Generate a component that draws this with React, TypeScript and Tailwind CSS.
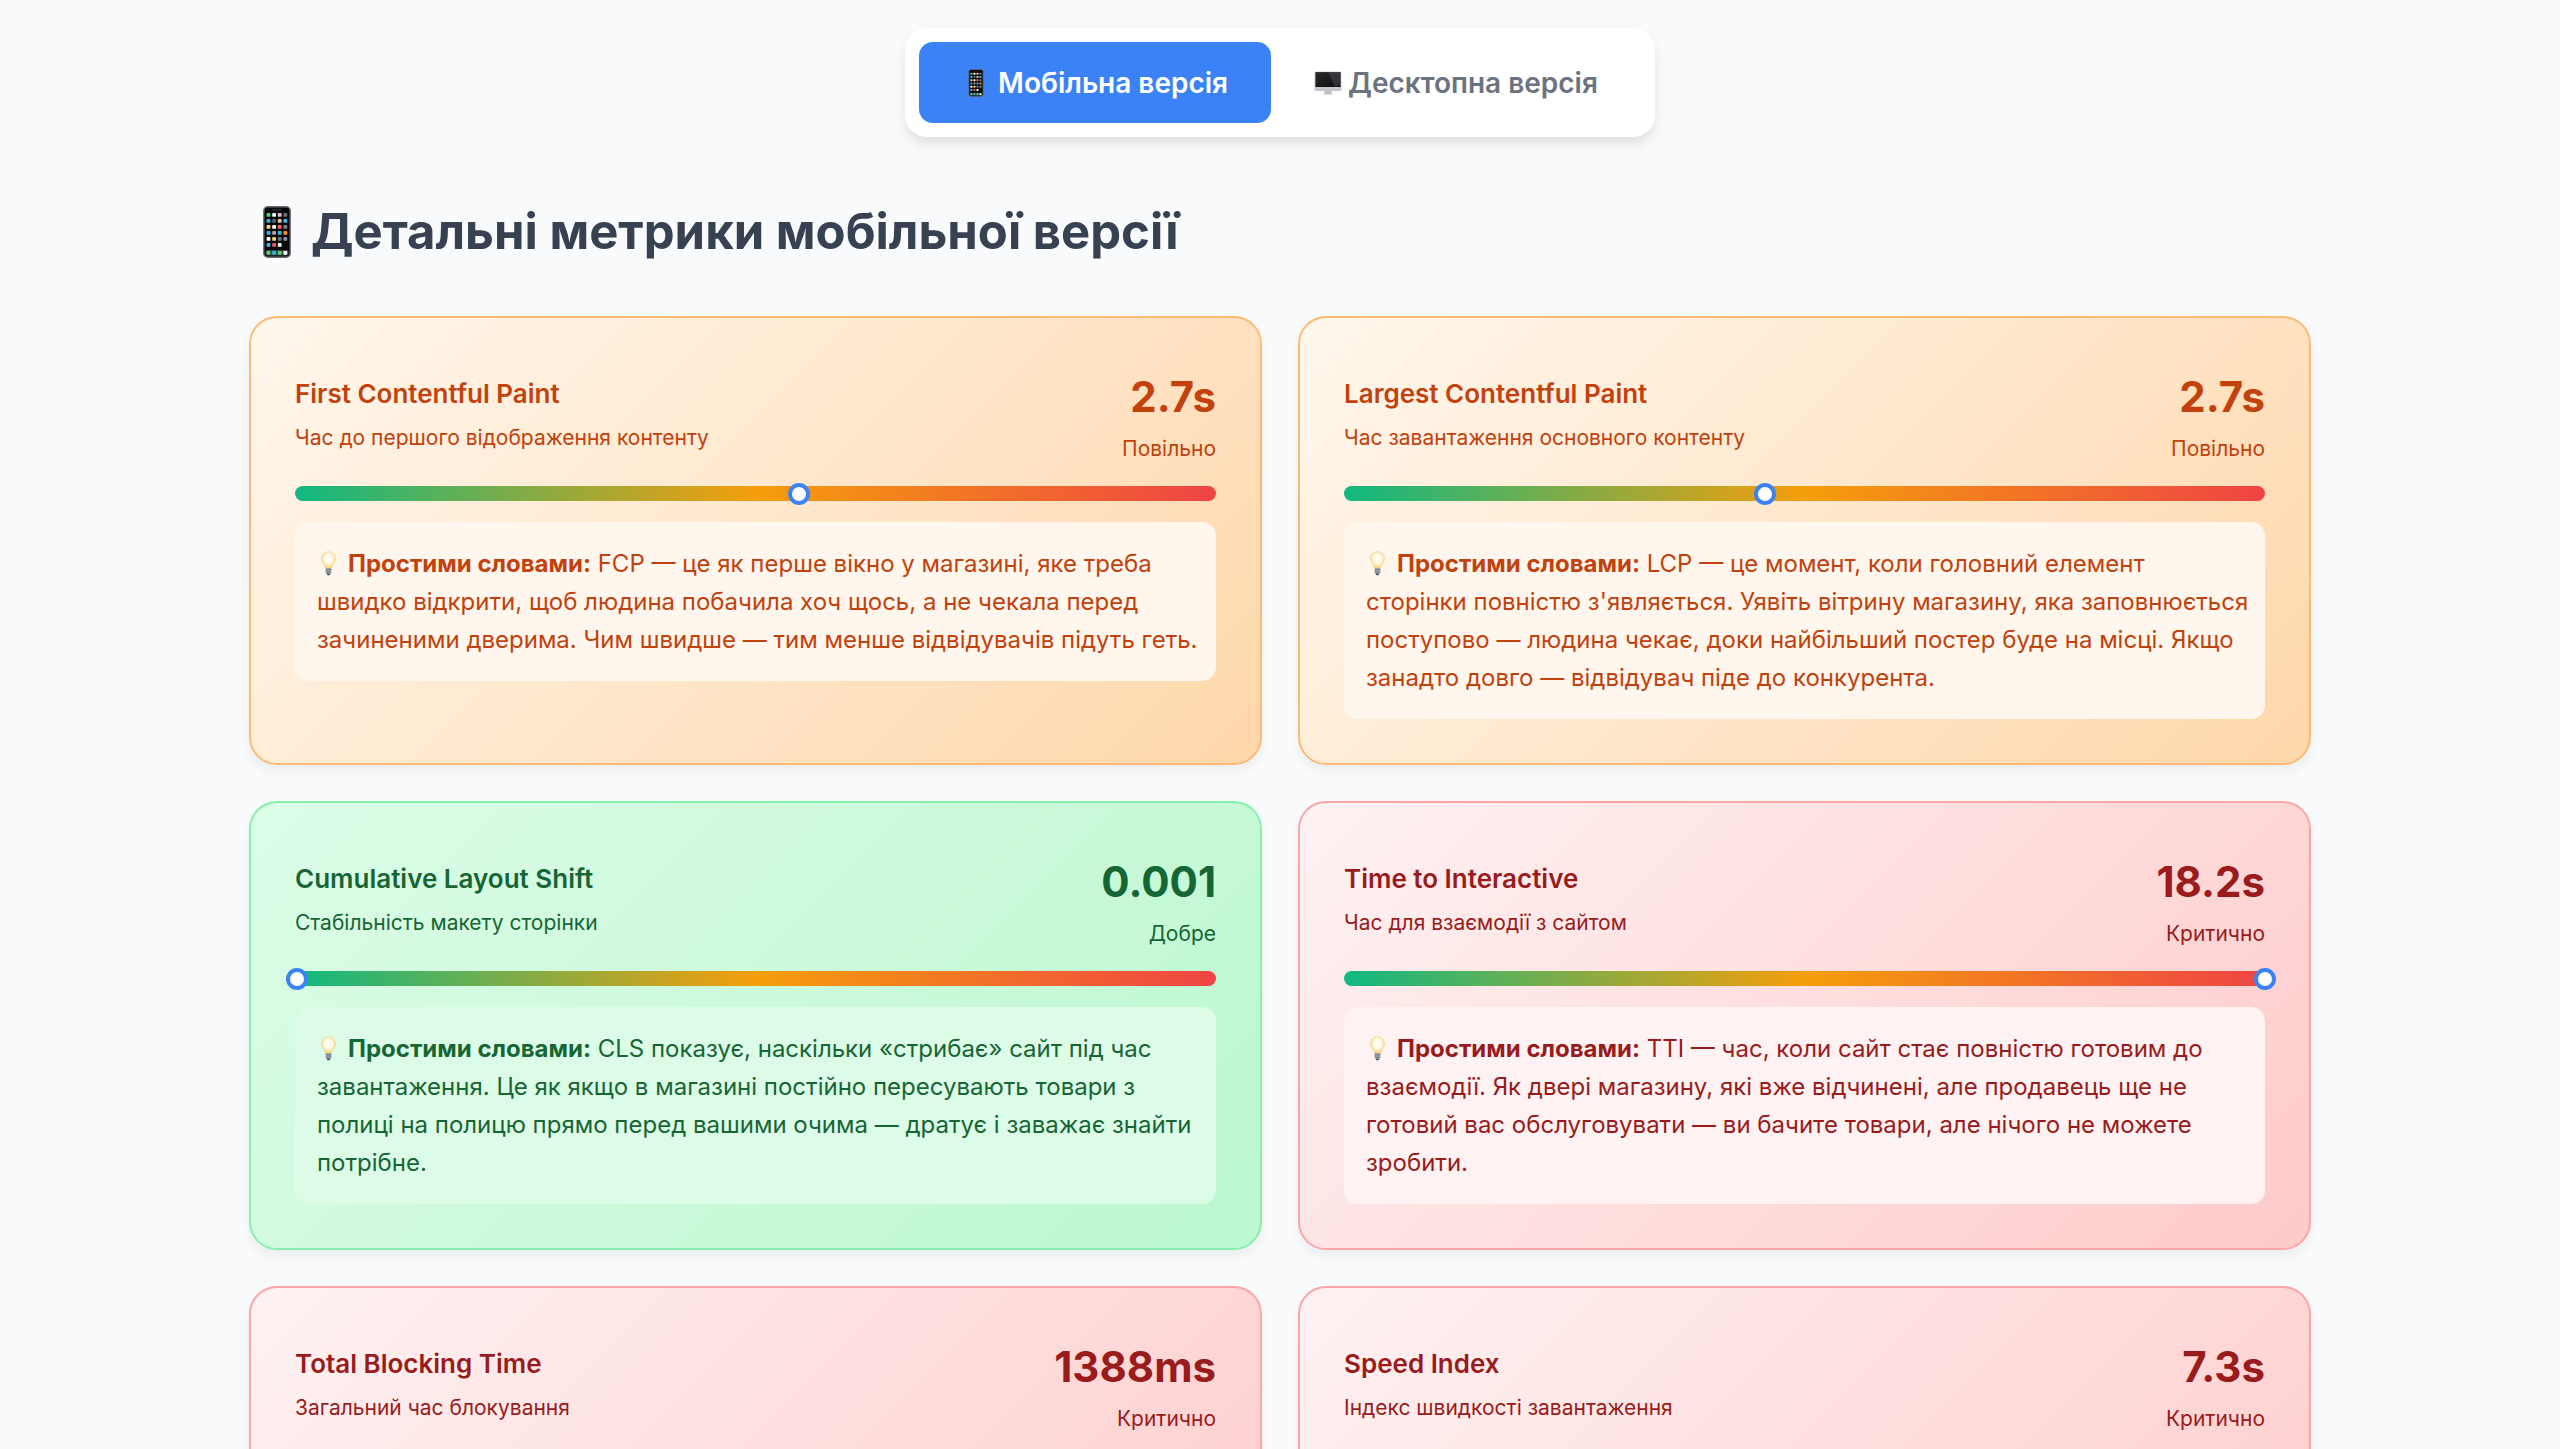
import { useState } from "react";

function PhoneIcon({ className }: { className: string }) {
  const colors = ["#4cd964", "#f4f4f5", "#e3c3cb", "#6f7078", "#35b8f1", "#5b6470", "#f2c0b0", "#38bdf8", "#f8d568", "#ffffff", "#ff6b5e", "#7b8088", "#2dbdf5", "#c99a9a", "#32b4ea", "#ff9500", "#ffffff", "#f8d568", "#64748b", "#8b8f96", "#35b8f1", "#ff5a4f", "#ffffff"];
  return (
    <svg viewBox="0 0 28 52" className={className} aria-hidden="true">
      <rect x="0.8" y="0.8" width="26.4" height="50.4" rx="4" fill="#08090b" stroke="#6b6d70" strokeWidth="1.4" />
      <rect x="9" y="2.8" width="10" height="1.6" rx="0.8" fill="#25262a" />
      {colors.map((c, i) => (
        <rect key={i} x={3.6 + (i % 4) * 5.6} y={7 + Math.floor(i / 4) * 6} width="3.8" height="3.8" rx="0.9" fill={c} />
      ))}
      <rect x="2.6" y="44" width="22.8" height="5.4" rx="1.6" fill="#3f4347" />
      {["#4cd964", "#35b8f1", "#4cd964", "#ffffff"].map((c, i) => (
        <rect key={i} x={3.6 + i * 5.6} y="44.9" width="3.8" height="3.8" rx="0.9" fill={c} />
      ))}
    </svg>
  );
}

function DesktopIcon({ className }: { className: string }) {
  return (
    <svg viewBox="0 0 30 26" className={className} aria-hidden="true">
      <defs>
        <linearGradient id="screen" x1="0" y1="0" x2="1" y2="1">
          <stop offset="0" stopColor="#2b2b2d" />
          <stop offset="1" stopColor="#0c0c0d" />
        </linearGradient>
        <linearGradient id="chin" x1="0" y1="0" x2="0" y2="1">
          <stop offset="0" stopColor="#dcdde0" />
          <stop offset="1" stopColor="#c3c5ca" />
        </linearGradient>
      </defs>
      <path d="M11.5 21h7l.6 4H10.9z" fill="#b9bbc0" />
      <rect x="10" y="24.4" width="10" height="1.4" rx=".7" fill="#d6d8dc" />
      <rect x="0.5" y="0.5" width="29" height="21" rx="1.4" fill="url(#chin)" />
      <rect x="1.5" y="1.3" width="27" height="16" fill="url(#screen)" />
      <path d="M15 1.3h13.5v14l-6 2z" fill="#55575b" opacity=".45" />
    </svg>
  );
}

function BulbIcon({ className }: { className: string }) {
  return (
    <svg viewBox="0 0 16 26" className={className} aria-hidden="true">
      <defs>
        <radialGradient id="glass" cx=".5" cy=".42" r=".58">
          <stop offset="0" stopColor="#ffffff" />
          <stop offset=".55" stopColor="#fff6dc" />
          <stop offset="1" stopColor="#f5d070" />
        </radialGradient>
      </defs>
      <path d="M8 .5C3.8.5.6 3.7.6 7.8c0 3.7 2.6 5.4 3.5 8.2.3.9.6 2 1.6 2h4.600c1 0 1.300-1.100 1.600-2 .9-2.800 3.500-4.500 3.500-8.200C15.4 3.700 12.200.5 8 .5z" fill="url(#glass)" stroke="#f3d488" strokeWidth=".8" />
      <path d="M5 17.800h6v4.700L9.600 25H6.400L5 22.500z" fill="#a3a8ae" />
      <path d="M5 19.300h6M5 21h6M5.200 22.700h5.600" stroke="#6b7280" strokeWidth=".7" />
      <path d="M6.200 24h3.600l-.8 1.500H7z" fill="#3f4650" />
    </svg>
  );
}

const tones = {
  slow: {
    card: "from-[#fff7ed] to-[#fed7aa] border-[#fdba74] text-[#c2410c]",
    note: "bg-[#fff7ed]",
  },
  good: {
    card: "from-[#dcfce7] to-[#bbf7d0] border-[#86efac] text-[#166534]",
    note: "bg-[#dcfce7]",
  },
  critical: {
    card: "from-[#fef2f2] to-[#fecaca] border-[#fca5a5] text-[#991b1b]",
    note: "bg-[#fef2f2]",
  },
};

type Metric = {
  name: string;
  about: string;
  value: string;
  status: string;
  tone: keyof typeof tones;
  position: number;
  note?: string;
};

const metrics: Metric[] = [
  {
    name: "First Contentful Paint",
    about: "Час до першого відображення контенту",
    value: "2.7s",
    status: "Повільно",
    tone: "slow",
    position: 54.7,
    note: "FCP — це як перше вікно у магазині, яке треба швидко відкрити, щоб людина побачила хоч щось, а не чекала перед зачиненими дверима. Чим швидше — тим менше відвідувачів підуть геть.",
  },
  {
    name: "Largest Contentful Paint",
    about: "Час завантаження основного контенту",
    value: "2.7s",
    status: "Повільно",
    tone: "slow",
    position: 45.7,
    note: "LCP — це момент, коли головний елемент сторінки повністю з'являється. Уявіть вітрину магазину, яка заповнюється поступово — людина чекає, доки найбільший постер буде на місці. Якщо занадто довго — відвідувач піде до конкурента.",
  },
  {
    name: "Cumulative Layout Shift",
    about: "Стабільність макету сторінки",
    value: "0.001",
    status: "Добре",
    tone: "good",
    position: 0.2,
    note: "CLS показує, наскільки «стрибає» сайт під час завантаження. Це як якщо в магазині постійно пересувають товари з полиці на полицю прямо перед вашими очима — дратує і заважає знайти потрібне.",
  },
  {
    name: "Time to Interactive",
    about: "Час для взаємодії з сайтом",
    value: "18.2s",
    status: "Критично",
    tone: "critical",
    position: 100,
    note: "TTI — час, коли сайт стає повністю готовим до взаємодії. Як двері магазину, які вже відчинені, але продавець ще не готовий вас обслуговувати — ви бачите товари, але нічого не можете зробити.",
  },
  {
    name: "Total Blocking Time",
    about: "Загальний час блокування",
    value: "1388ms",
    status: "Критично",
    tone: "critical",
    position: 100,
  },
  {
    name: "Speed Index",
    about: "Індекс швидкості завантаження",
    value: "7.3s",
    status: "Критично",
    tone: "critical",
    position: 100,
  },
];

function MetricCard({ metric }: { metric: Metric }) {
  const tone = tones[metric.tone];
  return (
    <article className={`min-h-[449px] rounded-[28px] border-2 bg-linear-135 p-11 shadow-[0_7px_11px_rgba(0,0,0,0.05)] ${tone.card}`}>
      <header className="mb-5 flex items-center justify-between">
        <div className="pb-0.5">
          <h3 className="mb-1.5 text-[26px] leading-[43px] font-semibold">{metric.name}</h3>
          <p className="text-[21px] leading-[34px]">{metric.about}</p>
        </div>
        <div className="text-right">
          <div className="text-[42px] leading-[70px] font-bold">{metric.value}</div>
          <div className="text-[21px] leading-[34px]">{metric.status}</div>
        </div>
      </header>
      <div className="relative mb-[21px] h-[15px] rounded-full bg-[linear-gradient(90deg,#10b981_0%,#f59e0b_50%,#ef4444_100%)]">
        <span
          className="absolute top-1/2 size-[22px] -translate-1/2 rounded-full border-4 border-[#3b82f6] bg-white"
          style={{ left: `${metric.position}%` }}
        />
      </div>
      {metric.note && (
        <p className={`rounded-[14px] pt-[23px] pr-4 pb-[22px] pl-[22px] text-[24px] leading-[38px] ${tone.note}`}>
          <BulbIcon className="mr-3 ml-1 inline-block h-[25px] w-[15px] align-[-4px]" />
          <strong className="font-bold">Простими словами:</strong> {metric.note}
        </p>
      )}
    </article>
  );
}

export default function App() {
  const [tab, setTab] = useState<"mobile" | "desktop">("mobile");
  const tabClass = (active: boolean) =>
    `flex h-[81px] items-center rounded-[14px] px-[43px] text-[28px] font-semibold ${active ? "bg-[#3b82f6] text-white" : "text-[#6b7280]"}`;
  return (
    <div className="min-h-screen bg-[#f9fafc] pt-7 font-['Inter','Noto_Sans',sans-serif]">
      <div className="flex justify-center">
        <nav className="flex rounded-[22px] bg-white p-3.5 shadow-[0_7px_11px_rgba(0,0,0,0.1)]">
          <button type="button" className={tabClass(tab === "mobile")} onClick={() => setTab("mobile")}>
            <PhoneIcon className="mr-3.5 ml-1.5 h-7 w-4" />
            Мобільна версія
          </button>
          <button type="button" className={tabClass(tab === "desktop")} onClick={() => setTab("desktop")}>
            <DesktopIcon className="mr-1.5 h-[26px] w-7" />
            Десктопна версія
          </button>
        </nav>
      </div>
      <main className="mx-auto mt-[53px] max-w-[2062px]">
        <h2 className="mb-[42px] flex items-center text-[49px] leading-[84px] font-bold text-[#374151]">
          <PhoneIcon className="mr-5 ml-3.5 h-[52px] w-7" />
          Детальні метрики мобільної версії
        </h2>
        <section className="grid grid-cols-2 gap-9">
          {metrics.map((m) => (
            <MetricCard key={m.name} metric={m} />
          ))}
        </section>
      </main>
    </div>
  );
}
